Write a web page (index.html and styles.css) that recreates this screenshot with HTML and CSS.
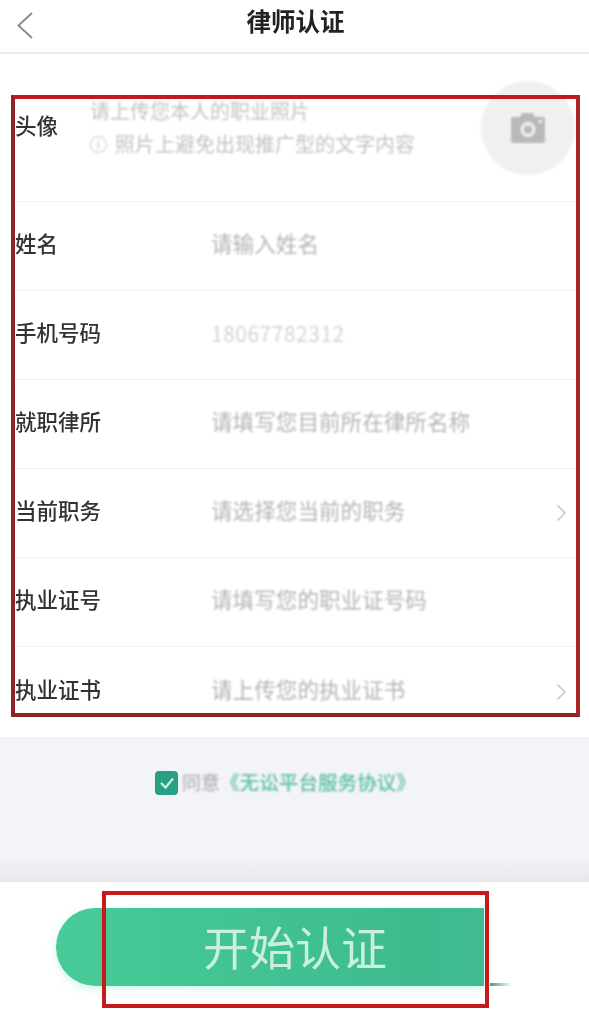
FILE: index.html
```html
<!DOCTYPE html>
<html lang="zh-CN">
<head>
<meta charset="utf-8">
<title>律师认证</title>
<link rel="stylesheet" href="styles.css">
</head>
<body>
<div class="page">
  <header class="topbar">
    <svg class="back" width="20" height="30" viewBox="0 0 20 30" aria-hidden="true"><path d="M17 2 3.500 14.500 17 27" fill="none" stroke="#8c8c8c" stroke-width="2"/></svg>
    <h1 class="title">律师认证</h1>
  </header>
  <main class="form">
    <section class="row row-avatar">
      <span class="label label-avatar">头像</span>
      <div class="hints">
        <p class="hint">请上传您本人的职业照片</p>
        <p class="hint"><span class="info">i</span>照片上避免出现推广型的文字内容</p>
      </div>
      <div class="avatar">
        <svg width="36" height="32" viewBox="0 0 36 32" aria-hidden="true"><path fill-rule="evenodd" d="M3 5h7l2-4h11l2 4h8a2 2 0 0 1 2 2v22a2 2 0 0 1-2 2H3a2 2 0 0 1-2-2V7a2 2 0 0 1 2-2ZM18 10a7.500 7.500 0 1 0 0 15 7.500 7.500 0 0 0 0-15ZM18 13.500a4 4 0 1 1 0 8 4 4 0 0 1 0-8ZM29 8h3v3h-3Z" fill="#b9b9b9"/></svg>
      </div>
    </section>
    <section class="row"><span class="label">姓名</span><span class="value">请输入姓名</span></section>
    <section class="row"><span class="label">手机号码</span><span class="value value-phone">18067782312</span></section>
    <section class="row"><span class="label">就职律所</span><span class="value">请填写您目前所在律所名称</span></section>
    <section class="row"><span class="label">当前职务</span><span class="value">请选择您当前的职务</span>
      <svg class="chev" width="11" height="18" viewBox="0 0 11 18" aria-hidden="true"><path d="M1.500 1.500 9 9l-7.500 7.500" fill="none" stroke="#c9c9c9" stroke-width="1.600"/></svg></section>
    <section class="row"><span class="label">执业证号</span><span class="value">请填写您的职业证号码</span></section>
    <section class="row row-last"><span class="label">执业证书</span><span class="value">请上传您的执业证书</span>
      <svg class="chev" width="11" height="18" viewBox="0 0 11 18" aria-hidden="true"><path d="M1.500 1.500 9 9l-7.500 7.500" fill="none" stroke="#c9c9c9" stroke-width="1.600"/></svg></section>
    <div class="mark mark-form"></div>
  </main>
  <section class="agree">
    <span class="check"><svg width="16" height="14" viewBox="0 0 16 14" aria-hidden="true"><path d="M2 7l4.500 4.500L14 2.500" fill="none" stroke="#c6f3dc" stroke-width="2.200"/></svg></span>
    <span class="agree-text">同意</span>
    <span class="agree-link">《无讼平台服务协议》</span>
  </section>
  <footer class="bottom">
    <button class="start" type="button">开始认证</button>
    <div class="mark mark-btn"></div>
  </footer>
</div>
</body>
</html>
```

FILE: styles.css
```css
* { box-sizing: border-box; }
html, body { margin: 0; padding: 0; background: #fff; }
.page {
  position: relative;
  width: 589px;
  height: 1024px;
  overflow: hidden;
  font-family: "Noto Sans CJK SC", "Noto Sans", sans-serif;
  background: #fff;
}
.topbar {
  position: relative;
  height: 54px;
  display: flex;
  align-items: center;
  justify-content: center;
  border-bottom: 2px solid #ececec;
  padding-bottom: 10px;
  padding-left: 2px;
}
.back { position: absolute; left: 15px; top: 11px; filter: blur(0.6px); }
.title {
  margin: 0;
  font-size: 24.500px;
  line-height: 32px;
  font-weight: 700;
  color: #222;
  filter: blur(0.7px);
}
.form { position: relative; height: 683px; }
.row {
  height: 89px;
  margin: 0 14px 0 15px;
  display: flex;
  align-items: center;
  border-bottom: 1px solid #f1f1f1;
}
.row-avatar { height: 148px; }
.row-last { border-bottom: 0; }
.label {
  width: 196px;
  flex: none;
  padding-bottom: 6px;
  font-size: 21.500px;
  line-height: 30px;
  color: #333;
  font-weight: 500;
  filter: blur(0.7px);
}
.label-avatar { width: 75px; padding-bottom: 5px; }
.value {
  flex: 1;
  padding-bottom: 6px;
  font-size: 21.600px;
  line-height: 30px;
  color: #b4b4b4;
  filter: blur(0.8px);
}
.value-phone { color: #d4d4d4; font-size: 21px; letter-spacing: 0.5px; padding-bottom: 4px; }
.chev { margin: 0 8px 0 0; filter: blur(0.5px); }
.hints { flex: 1; display: flex; flex-direction: column; gap: 5px; }
.hint {
  margin: 0;
  display: flex;
  align-items: center;
  font-size: 20px;
  line-height: 28px;
  color: #c2c2c2;
  filter: blur(0.8px);
}
.info {
  width: 17px;
  height: 17px;
  margin-right: 8px;
  border: 1.500px solid #c4c4c4;
  border-radius: 50%;
  font-size: 12px;
  line-height: 14px;
  text-align: center;
}
.avatar {
  width: 94px;
  height: 94px;
  flex: none;
  border-radius: 50%;
  background: #f0f0f0;
  display: flex;
  align-items: center;
  justify-content: center;
  filter: blur(0.9px);
}
.mark { position: absolute; border-style: solid; pointer-events: none; }
.mark-form {
  left: 11px;
  top: 41px;
  width: 569px;
  height: 622px;
  border-width: 4px;
  border-color: #c21a1c #a92526 #8d2427 #8d2427;
}
.agree {
  height: 145px;
  background: linear-gradient(#f3f4f7 0, #f3f4f7 118px, #e8e8ec 145px);
  padding: 33px 0 0 155px;
  display: flex;
  align-items: flex-start;
}
.check {
  width: 23px;
  height: 24px;
  margin: 1px 4px 0 0;
  border-radius: 4px;
  background: #2a9f85;
  display: flex;
  align-items: center;
  justify-content: center;
  filter: blur(0.5px);
}
.agree-text, .agree-link { font-size: 19px; line-height: 24px; filter: blur(0.8px); }
.agree-text { color: #a9a9a9; }
.agree-link { color: #5cc0a0; font-size: 19.600px; font-weight: 500; }
.bottom { position: relative; height: 142px; padding: 26px 0 0 56px; }
.bottom::after {
  content: "";
  position: absolute;
  left: 490px;
  top: 101px;
  width: 22px;
  height: 3px;
  background: linear-gradient(90deg, #3f9f85, rgba(120, 220, 190, 0));
  filter: blur(0.6px);
}
.start {
  width: 428px;
  height: 78px;
  padding: 0 0 4px 50px;
  border: 0;
  border-radius: 39px 0 0 39px;
  background: linear-gradient(90deg, #48cb98, #3dbb8d 85%, #41bb93);
  box-shadow: 0 3px 8px rgba(160, 240, 215, 0.5);
  font-family: inherit;
  font-size: 46px;
  line-height: 74px;
  color: #c8f0dc;
  filter: blur(0.6px);
}
.mark-btn {
  left: 102px;
  top: 9px;
  width: 387px;
  height: 117px;
  border-width: 4px;
  border-color: #c71a1c;
}
```
